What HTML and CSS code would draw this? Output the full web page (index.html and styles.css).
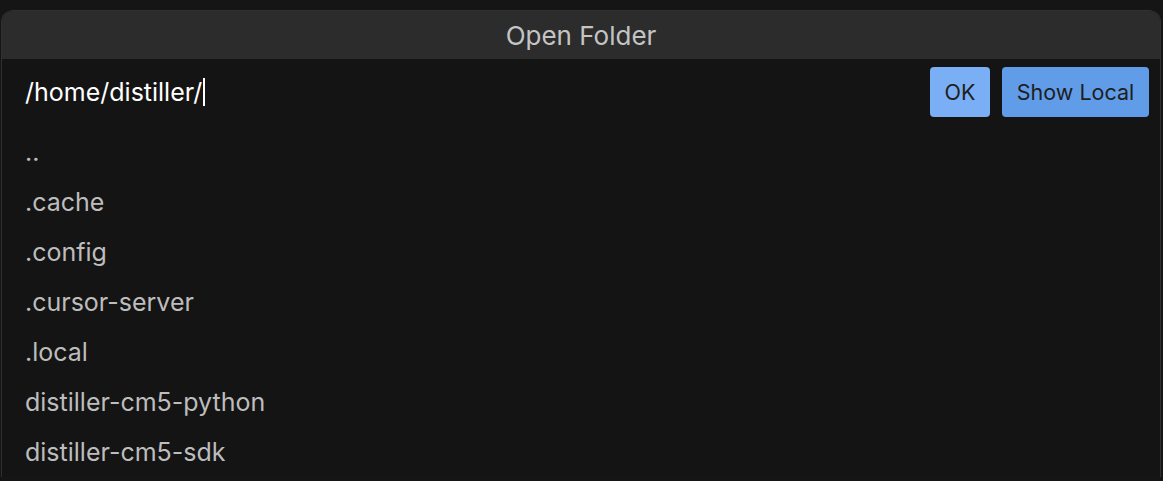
FILE: index.html
```html
<!DOCTYPE html>
<html lang="en">
<head>
    <meta charset="UTF-8">
    <title>Open Folder</title>
    <link rel="stylesheet" href="styles.css">
</head>
<body>

<div class="dialog">
    <div class="title-bar">Open Folder</div>

    <div class="path-row">
        <div class="path-input">/home/distiller/<span class="caret"></span></div>
        <button class="btn btn-ok">OK</button>
        <button class="btn btn-local">Show Local</button>
    </div>

    <ul class="folder-list">
        <li>..</li>
        <li>.cache</li>
        <li>.config</li>
        <li>.cursor-server</li>
        <li>.local</li>
        <li>distiller-cm5-python</li>
        <li>distiller-cm5-sdk</li>
    </ul>
</div>

</body>
</html>
```

FILE: styles.css
```css
body {
    font-family: Inter, "Noto Sans", sans-serif;
    margin: 0;
    padding: 10px 2px 0 1px;
    background-color: #151515;
    overflow: hidden;
}
.dialog {
    background: #141414;
    border: 1px solid #303030;
    border-bottom: none;
    border-radius: 12px 12px 0 0;
    overflow: hidden;
}
.title-bar {
    background: #2c2c2c;
    color: #c4c4c4;
    font-size: 26px;
    height: 48px;
    line-height: 50px;
    text-align: center;
}
.path-row {
    display: flex;
    align-items: center;
    gap: 12px;
    padding: 8px 11px 10px 23px;
}
.path-input {
    flex: 1;
    color: #fff;
    font-size: 25px;
    line-height: 50px;
    display: flex;
    align-items: center;
}
.caret {
    display: inline-block;
    width: 2px;
    height: 28px;
    background: #fff;
    margin-left: 1px;
}
.btn {
    font-family: inherit;
    font-size: 21.5px;
    color: #1e1e1e;
    height: 50px;
    border: none;
    border-radius: 4px;
    padding: 0;
}
.btn-ok {
    background: #7aaff5;
    width: 60px;
}
.btn-local {
    background: #619ce9;
    width: 147px;
}
.folder-list {
    list-style: none;
    margin: 0;
    padding: 0 0 0 23px;
}
.folder-list li {
    color: #bdbdbd;
    font-size: 25px;
    line-height: 50px;
    height: 50px;
}
```
